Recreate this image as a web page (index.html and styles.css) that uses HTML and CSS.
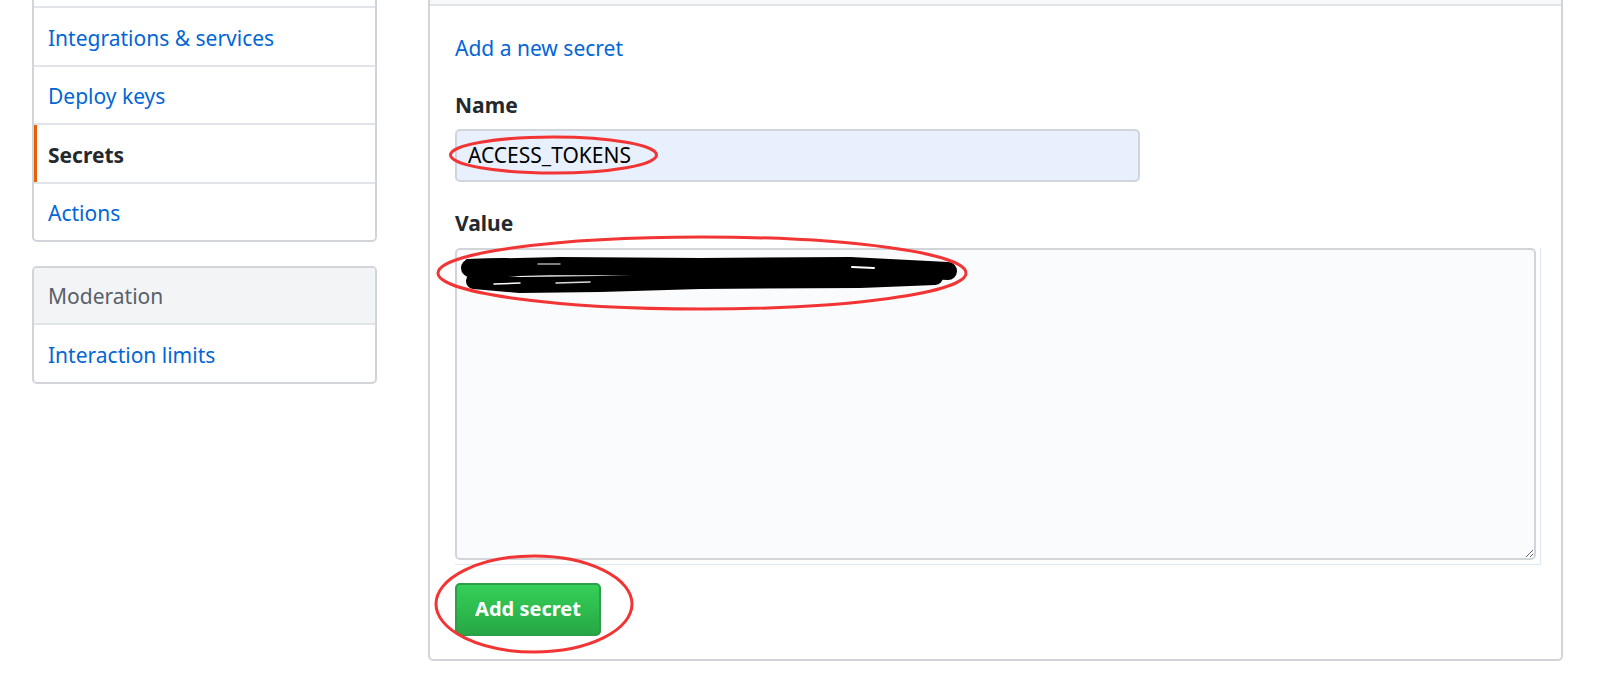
FILE: index.html
```html
<!DOCTYPE html>
<html lang="en">
<head>
<meta charset="utf-8">
<title>Secrets</title>
<link rel="stylesheet" href="styles.css">
</head>
<body>
<div class="page">
  <nav class="sidebar">
    <div class="menu">
      <a class="menu-item" href="#" aria-label="Collaborators"></a>
      <a class="menu-item" href="#">Integrations &amp; services</a>
      <a class="menu-item" href="#">Deploy keys</a>
      <a class="menu-item selected" href="#">Secrets</a>
      <a class="menu-item" href="#">Actions</a>
    </div>
    <div class="menu">
      <div class="menu-heading">Moderation</div>
      <a class="menu-item" href="#">Interaction limits</a>
    </div>
  </nav>
  <main class="box">
    <div class="box-header"></div>
    <div class="box-body">
      <a class="add-link" href="#">Add a new secret</a>
      <form class="secret-form">
        <label class="label label-name" for="name">Name</label>
        <input class="name-input" id="name" type="text" value="ACCESS_TOKENS">
        <label class="label label-value" for="value">Value</label>
        <div class="ta-wrap"><textarea class="value-input" id="value"></textarea></div>
        <button class="btn-primary" type="button">Add secret</button>
      </form>
    </div>
  </main>
</div>
<svg class="annotations" width="1615" height="673" viewBox="0 0 1615 673">
  <g class="scribble" fill="none" stroke="#000" stroke-linecap="round" stroke-linejoin="round">
    <polyline points="470,268 560,266 700,267 850,266 948,271" stroke-width="18"/>
    <polyline points="474,281 520,285 600,284 700,281 860,280 935,277" stroke-width="16"/>
    <polyline points="468,262 505,261" stroke-width="6"/>
  </g>
  <g fill="none" stroke="#fff" stroke-linecap="round">
    <line x1="538" y1="264" x2="560" y2="264" stroke-width="1.5" stroke="#aaa"/>
    <line x1="494" y1="284" x2="520" y2="283" stroke-width="1.5"/>
    <line x1="556" y1="283" x2="590" y2="282" stroke-width="1.5" stroke="#ddd"/>
    <line x1="852" y1="267" x2="874" y2="268" stroke-width="2"/>
  </g>
  <g fill="none" stroke="#f23434" stroke-width="3">
    <ellipse cx="553.5" cy="155" rx="103" ry="18"/>
    <ellipse cx="702" cy="273" rx="264" ry="36"/>
    <ellipse cx="534" cy="604" rx="98" ry="48"/>
  </g>
</svg>
</body>
</html>
```

FILE: styles.css
```css
* {
  box-sizing: border-box;
}

html,
body {
  margin: 0;
  padding: 0;
  background: #fff;
  overflow: hidden;
}

body {
  position: relative;
  width: 1615px;
  height: 673px;
  font-family: "Noto Sans", "Open Sans", sans-serif;
  font-size: 21px;
  line-height: 31.5px;
  color: #24292e;
}

a {
  color: #0366d6;
  text-decoration: none;
}

.page {
  display: flex;
  align-items: flex-start;
  gap: 51px;
  margin-top: -52.5px;
  padding-left: 32px;
}

/* Sidebar */
.sidebar {
  flex: none;
  width: 345px;
  display: flex;
  flex-direction: column;
  gap: 24px;
}

.menu {
  border: 2px solid #d1d5da;
  border-radius: 5px;
  background: #fff;
  overflow: hidden;
}

.menu-item {
  position: relative;
  display: block;
  height: 56.5px;
  padding: 14.5px 14px 10.5px;
  font-size: 21px;
  line-height: 31.5px;
  color: #0366d6;
}

.menu-item + .menu-item {
  height: 58.5px;
  border-top: 2px solid #e1e4e8;
}

.menu-item.selected {
  color: #24292e;
  font-weight: 700;
}

.menu-item.selected::before {
  content: "";
  position: absolute;
  left: -1px;
  top: 0;
  bottom: 0;
  width: 4px;
  background: #e36209;
}

.menu-heading {
  height: 57px;
  padding: 13px 14px 11px;
  background: #f3f4f6;
  border-bottom: 2px solid #e1e4e8;
  color: #586069;
  font-size: 21px;
}

/* Main box */
.box {
  flex: none;
  width: 1135px;
  border: 2px solid #d1d5da;
  border-radius: 5px;
  background: #fff;
}

.box-header {
  height: 56.5px;
  background: #f6f8fa;
  border-bottom: 2px solid #e1e4e8;
  border-radius: 5px 5px 0 0;
}

.box-body {
  padding: 26.5px 25px 23px 25px;
}

.add-link {
  display: block;
}

.secret-form {
  display: flex;
  flex-direction: column;
  align-items: flex-start;
}

.label {
  display: block;
  font-weight: 700;
  color: #24292e;
}

.label-name {
  margin-top: 25.5px;
}

.label-value {
  margin-top: 26px;
}

.name-input {
  display: block;
  width: 685px;
  height: 53px;
  margin: 7.5px 0 0 0;
  padding: 0 11px;
  border: 2px solid #d1d5da;
  border-radius: 5px;
  background: #e8f0fe;
  color: #000;
  font-family: inherit;
  font-size: 21px;
  outline: none;
}

.ta-wrap {
  align-self: stretch;
  margin: 8.5px -5px 0 0;
  padding: 0 4px 4px 0;
  border-right: 1px solid #dce9f6;
  border-bottom: 1px solid #dce9f6;
}

.value-input {
  display: block;
  width: 100%;
  height: 312px;
  margin: 0;
  padding: 10px 11px;
  border: 2px solid #d1d5da;
  border-radius: 5px;
  background: #fafbfc;
  font-family: inherit;
  font-size: 21px;
  outline: none;
  resize: both;
}

.btn-primary {
  display: block;
  width: 146px;
  height: 53px;
  margin-top: 18px;
  padding: 0;
  border: 2px solid #2c9e48;
  border-radius: 5px;
  background: linear-gradient(#34d058, #28a745);
  color: #fff;
  font-family: inherit;
  font-size: 20px;
  font-weight: 700;
  line-height: 31.5px;
  text-align: center;
}

/* Annotation overlay (red circles, marker scribble) */
.annotations {
  position: absolute;
  left: 0;
  top: 0;
  pointer-events: none;
}
```
